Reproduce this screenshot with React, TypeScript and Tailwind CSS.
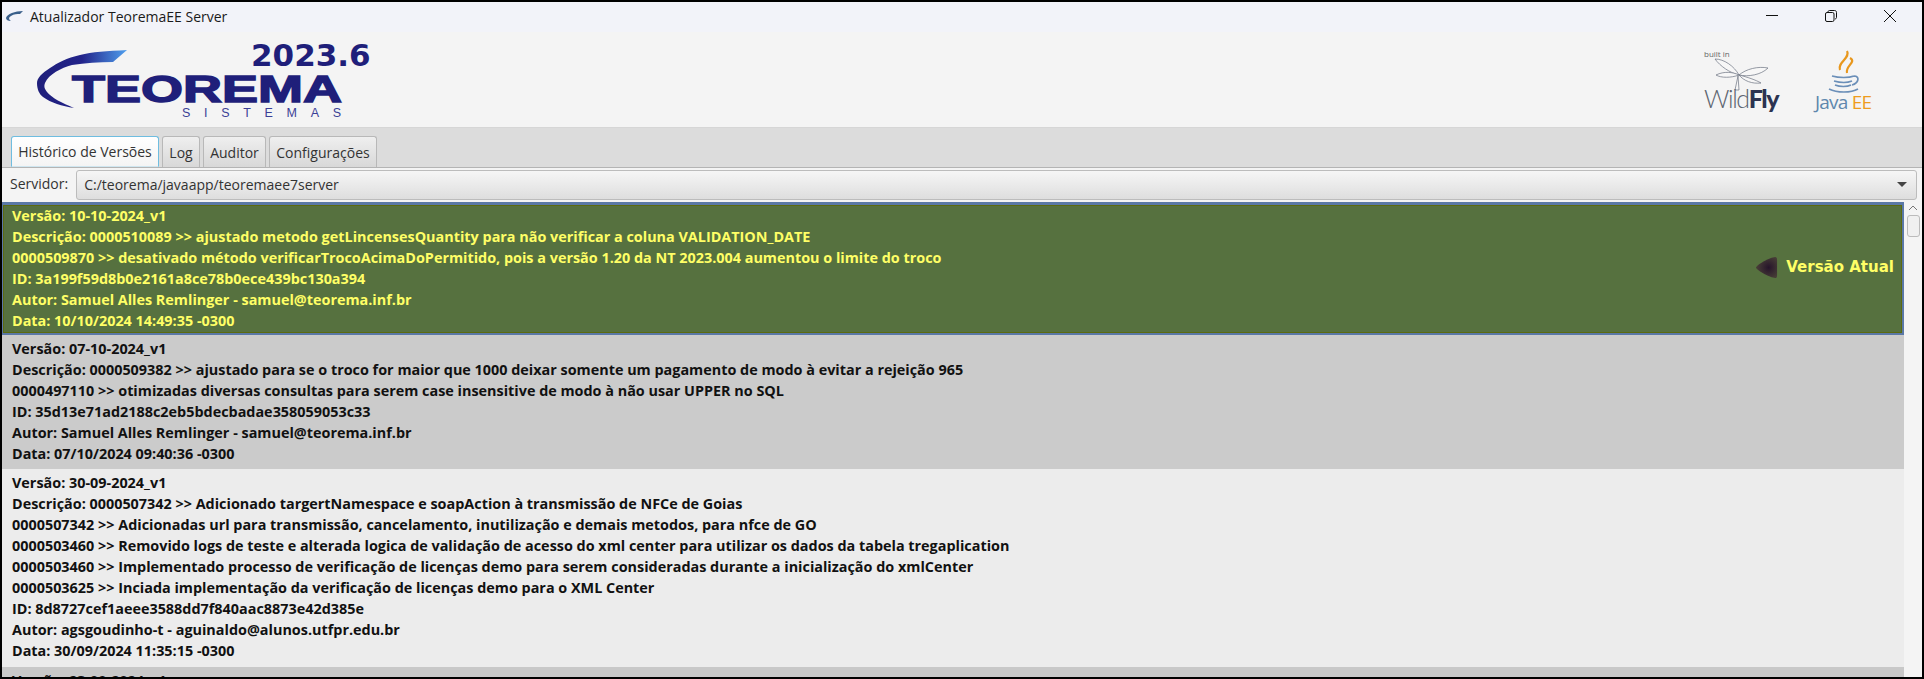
import React from "react";

const F = { fontFamily: '"Open Sans", "Noto Sans", sans-serif' };

function Row({ lines, cls, h, pt }: { lines: string[]; cls: string; h: string; pt: string }) {
  return (
    <div className={`${cls} ${h} ${pt} pl-[10px] shrink-0 text-[14.4px] leading-[21px] font-bold whitespace-nowrap overflow-hidden`}>
      {lines.map((l, i) => (
        <div key={i}>{l}</div>
      ))}
    </div>
  );
}

function TeoremaLogo() {
  return (
    <svg width="345" height="80" viewBox="0 0 345 80" className="block">
      <defs>
        <linearGradient id="sw" x1="0" x2="1" y1="0" y2="0">
          <stop offset="0" stopColor="#1f1f7a" />
          <stop offset="0.5" stopColor="#22238a" />
          <stop offset="1" stopColor="#4f9fee" />
        </linearGradient>
      </defs>
      <path d="M90 9 C70 10 55 11 43 14 C30 17 20 22 13 27 C5 32 0 37 0 42 C0 48 2 53 6 56 C14 62 25 65 37 67 C25 62 15 57 10 51 C7 47 7 45 8 42 C12 33 24 27 35 24 C48 22 62 21 76 21 Z" fill="url(#sw)" />
      <text x="35" y="61" fontFamily='"Liberation Sans", sans-serif' fontWeight="700" fontSize="37" fill="#1f1f7a" textLength="270" lengthAdjust="spacingAndGlyphs" stroke="#1f1f7a" strokeWidth="1.4">TEOREMA</text>
      <text x="145" y="76" fontFamily='"Liberation Sans", sans-serif' fontSize="12.5" fill="#3b3f96" textLength="159" lengthAdjust="spacing">SISTEMAS</text>
      <text x="214" y="25" fontFamily='"DejaVu Sans", sans-serif' fontWeight="700" fontSize="31" fill="#1f1f7a">2023.6</text>
    </svg>
  );
}

function WildFly() {
  return (
    <div className="relative w-[80px] h-[66px]">
      <span className="absolute left-0 top-[-1px] text-[8px] leading-[10px] text-[#666]" style={F}>built in</span>
      <svg width="56" height="34" viewBox="0 0 56 34" className="absolute left-[10px] top-[8px]">
        <g fill="#f7f7f7" stroke="#6a7180" strokeWidth="0.7">
          <path d="M1 1 C10 1 20 8 25 17 C16 15 6 8 1 1 Z" />
          <path d="M54 10 C44 8 32 11 25 17 C34 19 47 17 54 10 Z" />
          <path d="M2 17 C10 13 19 14 25 17 C17 20 7 20 2 17 Z" />
          <path d="M25 17 C33 19 42 22 47 25 C38 26 30 23 25 17 Z" />
          <path d="M24 18 L25 32 L21 32 Z" />
        </g>
      </svg>
      <div className="absolute left-0 top-[33px] text-[25px] leading-[30px] tracking-[-1.4px] text-[#5d6470] font-light whitespace-nowrap" style={{ fontFamily: '"Lato", sans-serif' }}>
        Wild<span className="font-black text-[#2b3350]">Fly</span>
      </div>
    </div>
  );
}

function JavaEE() {
  return (
    <div className="relative w-[60px] h-[66px]">
      <svg width="34" height="44" viewBox="0 0 34 44" className="absolute left-[12px] top-0" fill="none">
        <path d="M20 1 C24 8 10 12 13 20 M23 8 C30 12 18 16 20 23" stroke="#e8971c" strokeWidth="2.2" />
        <path d="M5 26 C12 28 22 28 27 26 M7 31 C14 33 20 33 25 31 M8 35 C13 37 20 37 24 35 M27 26 C33 26 32 33 25 35 M2 39 C10 43 24 43 31 39" stroke="#6b8fb8" strokeWidth="1.7" />
      </svg>
      <div className="absolute left-0 top-[40px] text-[19px] leading-[24px] tracking-[-0.8px] whitespace-nowrap" style={{ fontFamily: '"Open Sans", sans-serif' }}>
        <span className="text-[#5f87ad]">Java </span>
        <span className="text-[#ee9c1c]">EE</span>
      </div>
    </div>
  );
}

function Tab({ label, active, w }: { label: string; active?: boolean; w: string }) {
  return (
    <div
      className={`${w} h-[31px] flex items-center justify-center text-[14px] text-[#333] rounded-t-[3px] border ${
        active
          ? "border-[#6fbde0] border-b-[#cfe6f0] bg-gradient-to-b from-white to-[#f4f4f4]"
          : "border-[#b8b8b8] border-b-0 bg-gradient-to-b from-[#efefef] to-[#d8d8d8]"
      }`}
    >
      {label}
    </div>
  );
}

export default function App() {
  return (
    <div className="w-[1924px] h-[679px] overflow-hidden bg-black p-[2px]" style={F}>
      <div className="w-full h-full flex flex-col bg-[#f4f4f4] overflow-hidden">
        <div className="h-[30px] shrink-0 bg-[#f2f3f9] flex items-center pb-[2px]">
          <svg width="20" height="12" viewBox="0 0 20 12" className="ml-[3px]">
            <path d="M18 1 C10 1 2 4 1 8 C1 10 3 11 6 11 C3 9 4 7 6 6 C9 4 12 4 15 4 Z" fill="#3a5f8a" />
          </svg>
          <span className="ml-[5px] text-[14px] text-[#1a1a1a]">Atualizador TeoremaEE Server</span>
          <div className="ml-auto flex items-center gap-[47px] mr-[26px]">
            <svg width="12" height="12" viewBox="0 0 12 12"><path d="M0 5.5H12" stroke="#111" strokeWidth="1" /></svg>
            <svg width="12" height="12" viewBox="0 0 12 12" fill="none" stroke="#111"><rect x="0.5" y="2.5" width="8.5" height="9" rx="1.5" /><path d="M3 2.5V2C3 1 3.7 0.5 4.5 0.5H9.5C10.8 0.5 11.5 1.2 11.5 2.5V7.5C11.5 8.3 11 8.8 10 9" /></svg>
            <svg width="12" height="12" viewBox="0 0 12 12" stroke="#111" strokeWidth="1"><path d="M0 0L12 12M12 0L0 12" /></svg>
          </div>
        </div>

        <div className="h-[96px] shrink-0 bg-[#f4f4f4] flex justify-between border-b border-[#d6d6d6]">
          <div className="ml-[35px] mt-[9px]"><TeoremaLogo /></div>
          <div className="flex gap-[31px] mr-[47px] mt-[18px]">
            <WildFly />
            <JavaEE />
          </div>
        </div>

        <div className="h-[40px] shrink-0 bg-[#dcdcdc] border-b border-[#b4b4b4] flex items-end gap-[3px] pl-[9px]">
          <Tab label="Histórico de Versões" active w="w-[148px]" />
          <Tab label="Log" w="w-[38px]" />
          <Tab label="Auditor" w="w-[63px]" />
          <Tab label="Configurações" w="w-[108px]" />
        </div>

        <div className="h-[34px] shrink-0 bg-[#f4f4f4] flex items-start pt-[2px]">
          <span className="ml-[8px] text-[14px] leading-[28px] text-[#333]">Servidor:</span>
          <div className="ml-[8px] flex-1 h-[30px] mr-[5px] rounded-[3px] border border-[#bcbcbc] bg-gradient-to-b from-[#f6f6f6] to-[#dedede] flex items-center justify-between pl-[7px] pr-[9px] pb-[1px] text-[14px] text-[#333]">
            <span>C:/teorema/javaapp/teoremaee7server</span>
            <span className="w-0 h-0 border-x-[5px] border-x-transparent border-t-[5px] border-t-[#444]" />
          </div>
        </div>

        <div className="flex-1 min-h-0 flex bg-white">
          <div className="flex-1 min-w-0 flex flex-col overflow-hidden">
            <div className="h-[133px] shrink-0 border-t-[3px] border-b-[2px] border-r-[2px] border-l-[1px] border-[#5a78a6] flex">
              <div className="relative flex-1 bg-[#56713f] border border-[#5c6a10] text-[#ffff66] text-[14.4px] leading-[21px] font-bold whitespace-nowrap pl-[8px]">
                <div className="-mt-px">
                  <div>Versão: 10-10-2024_v1</div>
                  <div>Descrição: 0000510089 &gt;&gt; ajustado metodo getLincensesQuantity para não verificar a coluna VALIDATION_DATE</div>
                  <div>0000509870 &gt;&gt; desativado método verificarTrocoAcimaDoPermitido, pois a versão 1.20 da NT 2023.004 aumentou o limite do troco</div>
                  <div>ID: 3a199f59d8b0e2161a8ce78b0ece439bc130a394</div>
                  <div>Autor: Samuel Alles Remlinger - samuel@teorema.inf.br</div>
                  <div>Data: 10/10/2024 14:49:35 -0300</div>
                </div>
                <div className="absolute right-[7px] top-[50px] flex items-center gap-[8px]" style={{ fontFamily: '"DejaVu Sans", sans-serif', fontSize: 15 }}>
                  <svg width="23" height="23" viewBox="0 0 24 24">
                    <defs>
                      <radialGradient id="ar" cx="0.6" cy="0.5" r="0.55">
                        <stop offset="0" stopColor="#26142a" />
                        <stop offset="1" stopColor="#463c36" />
                      </radialGradient>
                    </defs>
                    <path d="M1 12 Q1 11 5 8 Q14 2 21 1 Q23 1 23 4 L23 20 Q23 23 21 23 Q14 22 5 16 Q1 13 1 12Z" fill="url(#ar)" />
                  </svg>
                  <span>Versão Atual</span>
                </div>
              </div>
            </div>
            <Row h="h-[134px]" pt="pt-[3px]" cls="bg-[#cbcbcb] text-[#111]" lines={[
              "Versão: 07-10-2024_v1",
              "Descrição: 0000509382 >> ajustado para se o troco for maior que 1000 deixar somente um pagamento de modo à evitar a rejeição 965",
              "0000497110 >> otimizadas diversas consultas para serem case insensitive de modo à não usar UPPER no SQL",
              "ID: 35d13e71ad2188c2eb5bdecbadae358059053c33",
              "Autor: Samuel Alles Remlinger - samuel@teorema.inf.br",
              "Data: 07/10/2024 09:40:36 -0300",
            ]} />
            <Row h="h-[198px]" pt="pt-[3px]" cls="bg-[#ececec] text-[#111]" lines={[
              "Versão: 30-09-2024_v1",
              "Descrição: 0000507342 >> Adicionado targertNamespace e soapAction à transmissão de NFCe de Goias",
              "0000507342 >> Adicionadas url para transmissão, cancelamento, inutilização e demais metodos, para nfce de GO",
              "0000503460 >> Removido logs de teste e alterada logica de validação de acesso do xml center para utilizar os dados da tabela tregaplication",
              "0000503460 >> Implementado processo de verificação de licenças demo para serem consideradas durante a inicialização do xmlCenter",
              "0000503625 >> Inciada implementação da verificação de licenças demo para o XML Center",
              "ID: 8d8727cef1aeee3588dd7f840aac8873e42d385e",
              "Autor: agsgoudinho-t - aguinaldo@alunos.utfpr.edu.br",
              "Data: 30/09/2024 11:35:15 -0300",
            ]} />
            <Row h="h-[30px]" pt="pt-[3px]" cls="bg-[#c8c8c8] text-[#111]" lines={["Versão: 23-09-2024_v1"]} />
          </div>
          <div className="w-[18px] shrink-0 bg-[#f4f4f4] flex flex-col items-center pt-[1px]">
            <svg width="12" height="10" viewBox="0 0 12 10" fill="none" stroke="#777"><path d="M2 7L6 3L10 7" /></svg>
            <div className="mt-[2px] w-[13px] h-[22px] rounded-[3px] border border-[#bbb] bg-[#f0f0f0]" />
          </div>
        </div>
      </div>
    </div>
  );
}
